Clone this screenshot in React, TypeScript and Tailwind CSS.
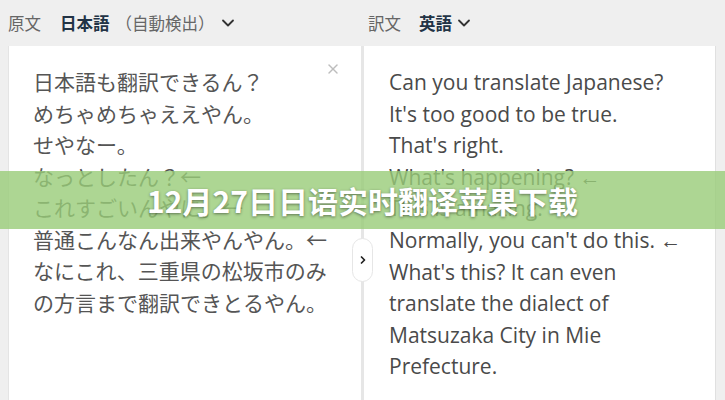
import { ChevronDown, ChevronRight, X } from "lucide-react";

const jpFont = { fontFamily: '"Noto Sans CJK JP", "Noto Sans", sans-serif' };

const sourceLines = [
  "日本語も翻訳できるん？",
  "めちゃめちゃええやん。",
  "せやなー。",
  "なっとしたん？←",
  "これすごいんやに。←",
  "普通こんなん出来やんやん。←",
  "なにこれ、三重県の松坂市のみ",
  "の方言まで翻訳できとるやん。",
];

const targetLines = [
  "Can you translate Japanese?",
  "It's too good to be true.",
  "That's right.",
  "What's happening? ←",
  "This is amazing.",
  "Normally, you can't do this. ←",
  "What's this? It can even",
  "translate the dialect of",
  "Matsuzaka City in Mie",
  "Prefecture.",
];

export default function App() {
  return (
    <div className="relative w-[725px] h-[400px] overflow-hidden bg-[#efefef]">
      <div className="flex h-full">
        {/* source column */}
        <div className="flex w-[361px] flex-col pl-2">
          <div
            className="flex h-[46px] items-center text-[16.5px] text-[#666]"
            style={jpFont}
          >
            <span>原文</span>
            <span className="ml-[19px] font-bold text-[#223345]">日本語</span>
            <span className="ml-[6px]">（自動検出）</span>
            <ChevronDown className="ml-[3px] h-5 w-5 text-[#333]" strokeWidth={2.2} />
          </div>
          <div className="relative flex-1 border-l border-[#e4e4e4] bg-white pl-[24px] pt-[20px]">
            <X className="absolute right-[20px] top-[15px] h-4 w-4 text-[#bdbdbd]" strokeWidth={2.2} />
            <div className="text-[21px] leading-[31.5px] text-[#555]" style={jpFont}>
              {sourceLines.map((line, i) => (
                <div key={i}>{line}</div>
              ))}
            </div>
          </div>
        </div>

        {/* divider */}
        <div className="mt-[46px] w-[3px] bg-[#e6e6e6]" />

        {/* target column */}
        <div className="flex w-[352px] flex-col">
          <div
            className="flex h-[46px] items-center pl-1 text-[16.5px] text-[#666]"
            style={jpFont}
          >
            <span>訳文</span>
            <span className="ml-[18px] font-bold text-[#223345]">英語</span>
            <ChevronDown className="ml-[2px] h-5 w-5 text-[#333]" strokeWidth={2.2} />
          </div>
          <div className="flex-1 border-r border-[#e0e0e0] bg-white pl-[25px] pt-[21px]">
            <div
              className="text-[21px] leading-[31.6px] text-[#4a4a4a]"
              style={{ fontFamily: '"Open Sans", "Noto Sans", sans-serif' }}
            >
              {targetLines.map((line, i) => (
                <div key={i}>{line}</div>
              ))}
            </div>
          </div>
        </div>
      </div>

      {/* swap button */}
      <div className="absolute left-[352px] top-[238px] flex h-[44px] w-[21px] items-center justify-center rounded-full border border-[#e6e6e6] bg-white">
        <ChevronRight className="h-3 w-3 text-[#222]" strokeWidth={3.5} />
      </div>

      {/* title band */}
      <div className="absolute left-0 right-0 top-[171px] flex h-[58px] items-center justify-center bg-[#98cc78]/80">
        <span
          className="text-[30px] font-bold text-white [text-shadow:0_1px_3px_rgba(0,0,0,0.45)]"
          style={{ fontFamily: '"Noto Sans CJK SC", "Noto Sans", sans-serif' }}
        >
          12月27日日语实时翻译苹果下载
        </span>
      </div>
    </div>
  );
}
